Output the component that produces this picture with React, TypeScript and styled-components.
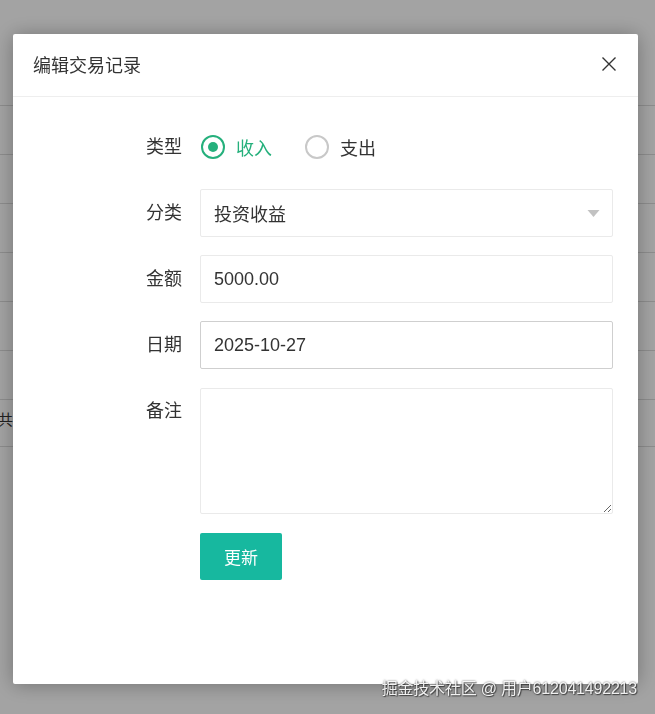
import styled, { createGlobalStyle } from 'styled-components'

const GlobalStyle = createGlobalStyle`
  html, body {
    margin: 0;
    padding: 0;
    height: 100%;
    background: #fff;
    font-family: "Liberation Sans", "Noto Sans CJK SC", sans-serif;
    color: #333;
  }
`

const rows = [0, 1, 2, 3, 4, 5, 6]

const App = () => {
  return (
    <>
      <GlobalStyle />
      <Page>
        <Table>
          {rows.map((r) => (
            <TableRow key={r} />
          ))}
        </Table>
        <Pager>共 7 条</Pager>
      </Page>

      <Overlay>
        <Dialog>
          <Header>
            <Title>编辑交易记录</Title>
            <CloseButton aria-label="关闭">
              <svg width="16" height="16" viewBox="0 0 16 16">
                <path d="M1.5 1.5 L14.5 14.5 M14.5 1.5 L1.5 14.5" stroke="#333" strokeWidth="1.4" fill="none" />
              </svg>
            </CloseButton>
          </Header>

          <Form>
            <Row>
              <Label>类型</Label>
              <RadioGroup>
                <RadioItem $checked>
                  <RadioCircle $checked />
                  收入
                </RadioItem>
                <RadioItem>
                  <RadioCircle />
                  支出
                </RadioItem>
              </RadioGroup>
            </Row>

            <Row>
              <Label>分类</Label>
              <Field>
                <Input readOnly value="投资收益" />
                <Caret viewBox="0 0 12 7" width="13" height="7">
                  <path d="M0 0 H12 L6 7 Z" fill="#c2c2c2" />
                </Caret>
              </Field>
            </Row>

            <Row>
              <Label>金额</Label>
              <Field>
                <Input readOnly value="5000.00" />
              </Field>
            </Row>

            <Row>
              <Label>日期</Label>
              <Field>
                <Input readOnly value="2025-10-27" $strong />
              </Field>
            </Row>

            <Row>
              <Label>备注</Label>
              <Field>
                <TextArea />
              </Field>
            </Row>

            <Row>
              <span />
              <div>
                <SubmitButton>更新</SubmitButton>
              </div>
            </Row>
          </Form>
        </Dialog>
      </Overlay>

      <Watermark>掘金技术社区 @ 用户612041492213</Watermark>
    </>
  )
}

export default App

const Page = styled.div`
  padding-top: 57px;
`

const Table = styled.div`
  display: flex;
  flex-direction: column;
`

const TableRow = styled.div`
  height: 48px;
  border-bottom: 1px solid #dcdcdc;
`

const Pager = styled.div`
  margin-left: -2px;
  font-size: 15px;
  line-height: 40px;
  color: #333;
  height: 46px;
  border-bottom: 1px solid #dcdcdc;
`

const Overlay = styled.div`
  position: fixed;
  inset: 0;
  background: rgba(0, 0, 0, 0.36);
  padding: 34px 0 0 13px;
  box-sizing: border-box;
`

const Dialog = styled.div`
  width: 625px;
  height: 650px;
  background: #fff;
  border-radius: 2px;
  box-shadow: 0 1px 20px rgba(0, 0, 0, 0.3);
  display: flex;
  flex-direction: column;
`

const Header = styled.div`
  height: 63px;
  box-sizing: border-box;
  border-bottom: 1px solid #eee;
  display: flex;
  align-items: center;
  justify-content: space-between;
  padding: 0 20px 3px 20px;
`

const Title = styled.div`
  font-size: 18px;
  color: #333;
`

const CloseButton = styled.button`
  border: none;
  background: none;
  padding: 0;
  width: 18px;
  height: 18px;
  display: flex;
  align-items: center;
  justify-content: center;
  cursor: pointer;
`

const Form = styled.div`
  display: flex;
  flex-direction: column;
  gap: 18px;
  padding: 26px 25px 0 25px;
`

const Row = styled.div`
  display: grid;
  grid-template-columns: 144px 1fr;
  column-gap: 18px;
  align-items: start;
`

const Label = styled.div`
  font-size: 18px;
  color: #333;
  line-height: 48px;
  text-align: right;
`

const RadioGroup = styled.div`
  display: flex;
  align-items: center;
  height: 48px;
  gap: 32px;
`

const RadioItem = styled.label<{ $checked?: boolean }>`
  display: flex;
  align-items: center;
  gap: 11px;
  font-size: 18px;
  color: ${({ $checked }) => ($checked ? '#25b07c' : '#333')};
  cursor: pointer;
`

const RadioCircle = styled.span<{ $checked?: boolean }>`
  width: 20px;
  height: 20px;
  border-radius: 50%;
  border: 2px solid ${({ $checked }) => ($checked ? '#25b07c' : '#c8c8c8')};
  display: flex;
  align-items: center;
  justify-content: center;
  margin-left: 1px;

  &::after {
    content: '';
    width: 10px;
    height: 10px;
    border-radius: 50%;
    background: #25b07c;
    display: ${({ $checked }) => ($checked ? 'block' : 'none')};
  }
`

const Field = styled.div`
  position: relative;
  display: flex;
`

const Input = styled.input<{ $strong?: boolean }>`
  width: 100%;
  height: 48px;
  box-sizing: border-box;
  border: 1px solid ${({ $strong }) => ($strong ? '#cfcfcf' : '#eaeaea')};
  border-radius: 2px;
  padding: 0 13px;
  font-family: "Liberation Sans", "Noto Sans CJK SC", sans-serif;
  font-size: 18px;
  color: #333;
  background: #fff;
  outline: none;
`

const Caret = styled.svg`
  position: absolute;
  right: 13px;
  top: 21px;
`

const TextArea = styled.textarea`
  width: 100%;
  height: 126px;
  margin-top: 1px;
  box-sizing: border-box;
  border: 1px solid #eaeaea;
  border-radius: 2px;
  padding: 10px 13px;
  font-family: "Liberation Sans", "Noto Sans CJK SC", sans-serif;
  font-size: 16px;
  color: #333;
  resize: vertical;
  outline: none;
  display: block;
`

const SubmitButton = styled.button`
  width: 82px;
  height: 47px;
  margin-top: 1px;
  border: none;
  border-radius: 2px;
  background: #17b89f;
  color: #fff;
  font-family: "Liberation Sans", "Noto Sans CJK SC", sans-serif;
  font-size: 17px;
  cursor: pointer;
`

const Watermark = styled.div`
  position: fixed;
  right: 18px;
  bottom: 15px;
  font-size: 16px;
  letter-spacing: -0.2px;
  color: rgba(255, 255, 255, 0.92);
  text-shadow: 0 0 2px rgba(0, 0, 0, 0.7), 1px 1px 1px rgba(0, 0, 0, 0.5);
`
